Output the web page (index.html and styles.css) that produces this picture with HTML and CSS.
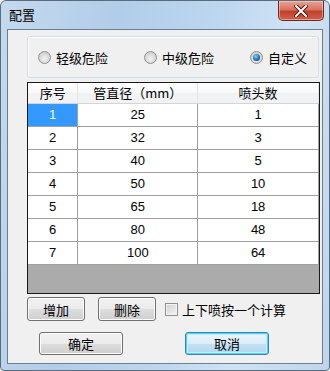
FILE: index.html
```html
<!DOCTYPE html>
<html lang="zh-CN">
<head>
    <meta charset="UTF-8">
    <title>配置</title>
    <link rel="stylesheet" href="styles.css">
</head>
<body>
    <div class="window">
        <div class="title-bar">
            <span class="title">配置</span>
            <button class="close-btn">
                <svg width="14" height="12" viewBox="0 0 14 12">
                    <path d="M2 1 L12 11 M12 1 L2 11" stroke="#4a1a12" stroke-width="4" stroke-linecap="square"/>
                    <path d="M2 1 L12 11 M12 1 L2 11" stroke="#ffffff" stroke-width="2" stroke-linecap="square"/>
                </svg>
            </button>
        </div>
        <div class="client">
            <div class="group">
                <label class="radio"><span class="radio-dot"></span>轻级危险</label>
                <label class="radio"><span class="radio-dot"></span>中级危险</label>
                <label class="radio"><span class="radio-dot checked"></span>自定义</label>
            </div>
            <div class="grid-view">
                <table class="data">
                    <thead>
                        <tr><th class="col-no">序号</th><th class="col-d">管直径（mm）</th><th class="col-n">喷头数</th></tr>
                    </thead>
                    <tbody>
                        <tr><td class="selected">1</td><td>25</td><td>1</td></tr>
                        <tr><td>2</td><td>32</td><td>3</td></tr>
                        <tr><td>3</td><td>40</td><td>5</td></tr>
                        <tr><td>4</td><td>50</td><td>10</td></tr>
                        <tr><td>5</td><td>65</td><td>18</td></tr>
                        <tr><td>6</td><td>80</td><td>48</td></tr>
                        <tr><td>7</td><td>100</td><td>64</td></tr>
                    </tbody>
                </table>
            </div>
            <div class="tools">
                <button class="btn small">增加</button>
                <button class="btn small">删除</button>
                <label class="check"><span class="check-box"></span>上下喷按一个计算</label>
            </div>
            <div class="actions">
                <button class="btn wide">确定</button>
                <button class="btn wide focused">取消</button>
            </div>
        </div>
    </div>
</body>
</html>
```

FILE: styles.css
```css
* {
    margin: 0;
    padding: 0;
    box-sizing: border-box;
}

body {
    width: 330px;
    height: 371px;
    overflow: hidden;
    font-family: "Noto Sans CJK SC", "Liberation Sans", sans-serif;
    font-size: 12px;
    color: #000;
    background: #ffffff;
}

.window {
    width: 330px;
    height: 371px;
    display: flex;
    flex-direction: column;
    border: 1px solid #5b6b7c;
    border-radius: 6px 6px 4px 4px;
    background: linear-gradient(100deg, #c4d9ee 0%, #b2cde9 30%, #bcd6ef 55%, #cfe2f5 75%, #bed5ec 100%);
    padding: 0 6px 6px 6px;
}

.title-bar {
    height: 28px;
    display: flex;
    justify-content: space-between;
    align-items: flex-start;
}

.title {
    margin: 6px 0 0 2px;
    font-size: 13px;
    line-height: 16px;
}

.close-btn {
    width: 46px;
    height: 20px;
    margin-right: -1px;
    border: 1px solid #6b2a22;
    border-top: none;
    border-radius: 0 0 5px 5px;
    background: linear-gradient(#e8a292 0%, #d8735f 45%, #c2402a 55%, #d0604a 100%);
    box-shadow: inset 0 0 0 1px rgba(255, 220, 210, 0.5);
    display: flex;
    align-items: center;
    justify-content: center;
}

.client {
    flex: 1;
    border: 1px solid #6d7e8f;
    background: #f0f0f0;
    padding: 6px 2px 0 19px;
    display: flex;
    flex-direction: column;
}

.group {
    height: 42px;
    border: 1px solid #d5dfe5;
    border-radius: 3px;
    box-shadow: inset 1px 1px 0 #ffffff;
    display: flex;
    align-items: center;
    padding: 0 0 0 10px;
    margin-right: 1px;
}

.radio {
    display: flex;
    align-items: center;
    gap: 5px;
    font-size: 13px;
}

.radio:nth-child(1) { width: 106px; }
.radio:nth-child(2) { width: 106px; }

.radio-dot {
    width: 13px;
    height: 13px;
    border-radius: 50%;
    border: 1px solid #8e8f8f;
    background: radial-gradient(circle at 50% 60%, #f4f4f4 0%, #d8d8d8 55%, #c4c4c4 100%);
    position: relative;
}

.radio-dot.checked::after {
    content: "";
    position: absolute;
    left: 2px;
    top: 2px;
    width: 7px;
    height: 7px;
    border-radius: 50%;
    background: radial-gradient(circle at 40% 35%, #8fd2f5 0%, #1b6fb4 55%, #0c3f7a 100%);
}

.grid-view {
    margin-top: 4px;
    height: 212px;
    border: 1px solid #1a1a1a;
    background: #ababab;
}

.data {
    border-collapse: collapse;
    width: 291px;
    font-family: "Liberation Sans", "Noto Sans CJK SC", sans-serif;
}

.data th {
    height: 20px;
    font-family: "Noto Sans CJK SC", sans-serif;
    font-weight: normal;
    font-size: 13px;
    background: linear-gradient(#ffffff 0%, #f7f8fa 50%, #f1f2f4 51%, #f1f2f4 100%);
    border-right: 1px solid #e3e4e6;
    border-bottom: 1px solid #d5d5d5;
    padding: 0;
}

.col-no { width: 50px; }
.col-d { width: 120px; }
.col-n { width: 121px; }

.data td {
    height: 23px;
    background: #ffffff;
    border-right: 1px solid #a0a0a0;
    border-bottom: 1px solid #a0a0a0;
    text-align: center;
    font-size: 13px;
    padding: 0;
}

.data td.selected {
    background: #3399ff;
    color: #ffffff;
}

.tools {
    display: flex;
    align-items: center;
    margin-top: 3px;
    height: 24px;
}

.btn {
    font-family: "Noto Sans CJK SC", sans-serif;
    font-size: 13px;
    border: 1px solid #707070;
    border-radius: 3px;
    background: linear-gradient(#f2f2f2 0%, #ebebeb 50%, #dddddd 51%, #cfcfcf 100%);
    box-shadow: inset 0 0 0 1px #fcfcfc;
    color: #000;
}

.btn.small {
    width: 58px;
    height: 24px;
    margin-right: 13px;
}

.btn.small + .btn.small {
    margin-right: 9px;
}

.check {
    display: flex;
    align-items: center;
    gap: 4px;
    font-size: 13px;
}

.check-box {
    width: 13px;
    height: 13px;
    border: 1px solid #8e8f8f;
    background: linear-gradient(135deg, #d0d0d0, #f4f4f4);
    box-shadow: inset 0 0 0 1px #f4f4f4;
}

.actions {
    display: flex;
    margin-top: 11px;
    padding-left: 12px;
    gap: 62px;
}

.btn.wide {
    width: 84px;
    height: 23px;
}

.btn.focused {
    border-color: #3c7fb1;
    box-shadow: inset 0 0 0 1px #48d8fb, inset 0 0 0 2px #c4ecfb;
    background: linear-gradient(#ecf6fb 0%, #dcecf7 50%, #c3e1f3 51%, #b2d6ee 100%);
}
```
